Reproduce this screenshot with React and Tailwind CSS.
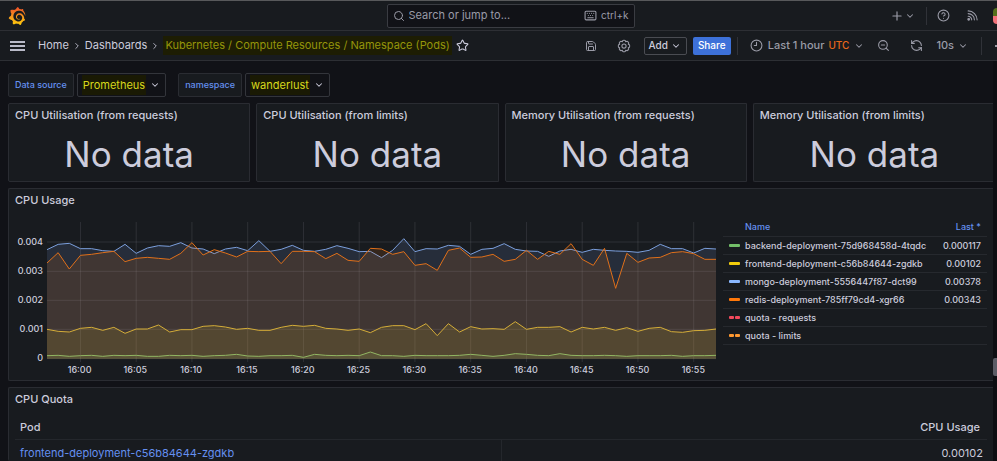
import React from "react";
import { SiGrafana } from "react-icons/si";
import { Search, ChevronDown, ChevronRight, Plus, CircleHelp, Clock9, ZoomOut, RefreshCcw, Keyboard, Save, Star } from "lucide-react";

// Samples are one minute apart; heights are in plot units (401 = 0, 51 = 0.004).
const SERIES = [
  {
    name: "green",
    stroke: "#73bf69",
    fill: "#73bf69",
    points: [392, 391, 394, 392, 391, 394, 391, 392, 391, 394, 394, 391, 392, 391, 394, 392, 391, 388, 393, 394, 392, 392, 391, 397, 388, 391, 392, 391, 392, 381, 392, 392, 394, 391, 392, 392, 392, 391, 388, 391, 394, 391, 386, 388, 391, 392, 386, 391, 392, 392, 391, 392, 394, 392, 392, 392, 391, 394, 392, 392, 391],
  },
  {
    name: "yellow",
    stroke: "#d9b526",
    fill: "#f2cc0c",
    points: [313, 319, 321, 310, 307, 316, 307, 325, 312, 312, 300, 321, 314, 314, 304, 302, 306, 313, 310, 316, 316, 307, 301, 304, 301, 310, 312, 316, 312, 323, 307, 302, 302, 314, 296, 332, 296, 321, 305, 312, 311, 313, 290, 313, 307, 307, 305, 321, 307, 312, 307, 316, 308, 319, 310, 307, 320, 322, 317, 316, 312],
  },
  {
    name: "blue",
    stroke: "#7b9fdd",
    fill: "#8ab8ff",
    points: [74, 58, 55, 71, 71, 77, 79, 58, 85, 69, 62, 64, 53, 69, 72, 86, 72, 67, 77, 47, 79, 73, 61, 76, 79, 73, 62, 70, 80, 79, 98, 76, 41, 80, 71, 72, 61, 64, 88, 73, 70, 56, 73, 78, 79, 94, 78, 73, 82, 73, 76, 78, 79, 82, 76, 58, 71, 71, 84, 70, 72],
  },
  {
    name: "orange",
    stroke: "#e0701a",
    fill: "#ff780a",
    points: [114, 83, 132, 91, 88, 83, 79, 110, 100, 97, 100, 103, 85, 53, 90, 74, 84, 96, 79, 80, 79, 116, 79, 79, 80, 101, 85, 106, 109, 70, 72, 88, 80, 121, 116, 136, 76, 69, 97, 96, 88, 109, 103, 76, 103, 79, 88, 56, 103, 121, 70, 190, 85, 112, 99, 97, 83, 80, 86, 103, 103],
  },
];

const TIMES = ["16:00", "16:05", "16:10", "16:15", "16:20", "16:25", "16:30", "16:35", "16:40", "16:45", "16:50", "16:55"];
const TICKS = ["0.004", "0.003", "0.002", "0.001", "0"];

const LEGEND = [
  { name: "backend-deployment-75d968458d-4tqdc", last: "0.000117", color: "bg-[#73bf69]" },
  { name: "frontend-deployment-c56b84644-zgdkb", last: "0.00102", color: "bg-[#f2cc0c]" },
  { name: "mongo-deployment-5556447f87-dct99", last: "0.00378", color: "bg-[#8ab8ff]" },
  { name: "redis-deployment-785ff79cd4-xgr66", last: "0.00343", color: "bg-[#ff780a]" },
  { name: "quota - requests", last: "", color: "bg-[#f2495c]", dashed: true },
  { name: "quota - limits", last: "", color: "bg-[#ff9830]", dashed: true },
];

const STATS = [
  "CPU Utilisation (from requests)",
  "CPU Utilisation (from limits)",
  "Memory Utilisation (from requests)",
  "Memory Utilisation (from limits)",
];

function line(points) {
  return points.map((y, i) => `${i * 10},${y}`).join(" ");
}

function Chart() {
  return (
    <svg viewBox="0 -9 600 420" preserveAspectRatio="none" className="block h-[140px] w-full" role="img" aria-label="CPU usage by pod">
      <g stroke="#ccccdc" strokeOpacity="0.12">
        {[51, 139, 226, 313, 401].map((y) => (
          <line key={y} x1="0" x2="600" y1={y} y2={y} vectorEffect="non-scaling-stroke" />
        ))}
        {TIMES.map((t, i) => (
          <line key={t} x1={30 + i * 50} x2={30 + i * 50} y1="-9" y2="411" vectorEffect="non-scaling-stroke" />
        ))}
      </g>
      {SERIES.map((s) => (
        <g key={s.name}>
          <polygon points={`0,401 ${line(s.points)} 600,401`} fill={s.fill} fillOpacity="0.12" />
          <polyline points={line(s.points)} fill="none" stroke={s.stroke} strokeWidth="1" vectorEffect="non-scaling-stroke" />
        </g>
      ))}
    </svg>
  );
}

function CogIcon() {
  return (
    <svg viewBox="0 0 24 24" className="size-[14px]" fill="none" stroke="currentColor" strokeWidth="1.8" strokeLinejoin="round">
      <path d="M10 2.6q2-.8 4 0l1 2 2.2-.7q2 .9 2.9 2.9l-.7 2.2 2 1q.8 2 0 4l-2 1 .7 2.2q-.9 2-2.9 2.9l-2.2-.7-1 2q-2 .8-4 0l-1-2-2.2.7q-2-.9-2.9-2.9l.7-2.2-2-1q-.8-2 0-4l2-1-.7-2.2q.9-2 2.9-2.9l2.2.7z" />
      <circle cx="12" cy="12" r="3.6" />
    </svg>
  );
}

function NewsIcon() {
  return (
    <svg viewBox="0 0 24 24" className="size-[13px]" fill="none" stroke="currentColor" strokeWidth="2" strokeLinecap="round">
      <path d="M4 3.5A16.5 16.5 0 0 1 20.5 20M4 8.500A11.5 11.5 0 0 1 15.5 20M4 13.500A6.5 6.5 0 0 1 10.5 20" />
      <circle cx="5" cy="19" r="1.6" fill="currentColor" />
    </svg>
  );
}

function Caret() {
  return <ChevronDown className="mx-px size-[10px] shrink-0" strokeWidth={2.5} />;
}

function Panel({ title, className = "", children }) {
  return (
    <section className={`rounded-l-[2px] border border-[#2a2c32] bg-[#181b1f] ${className}`}>
      <h2 className="flex h-[22px] items-center whitespace-nowrap px-1.5 text-[11px] font-medium">{title}</h2>
      {children}
    </section>
  );
}

function Variable({ label, value }) {
  return (
    <div className="flex h-6 gap-[3px]">
      <span className="flex items-center rounded-[2px] border border-[#2a2c32] bg-[#181b1f] px-1.5 text-[9px] font-medium text-[#6590f0]">{label}</span>
      <button type="button" aria-label={`${label}: ${value}`} className="flex items-center gap-[3px] rounded-[2px] border border-[#33353b] bg-[#111217] px-1 text-[11px] text-[#d8d81c]">
        <span className="bg-[#1a1a04] px-px py-0.5">{value}</span>
        <span className="text-[#ccccdc]"><Caret /></span>
      </button>
    </div>
  );
}

function Divider() {
  return <span className="h-[18px] w-px shrink-0 bg-[#303238]" />;
}

export default function App() {
  return (
    <div className="flex h-screen flex-col overflow-hidden border-t border-[#58595b] bg-[#111217] font-['Inter',sans-serif] text-[#ccccdc]">
      <svg className="absolute size-0" aria-hidden="true">
        <linearGradient id="flame" x1="0" y1="1" x2="0" y2="0">
          <stop offset="0" stopColor="#fccc0c" />
          <stop offset="0.5" stopColor="#f7941d" />
          <stop offset="1" stopColor="#ef4e28" />
        </linearGradient>
      </svg>

      <header className="grid h-[30px] shrink-0 grid-cols-[1fr_248px_1fr] items-center border-b border-[#2d2f34] bg-[#181b1f] text-[#9a9ba7]">
        <a href="#home" aria-label="Grafana" className="ml-2 w-[18px]">
          <SiGrafana className="size-[18px] fill-[url(#flame)]" />
        </a>
        <label className="ml-3 mr-[-12px] flex h-6 items-center gap-1 rounded-[2px] border border-[#3a3c42] bg-[#111217] px-[5px]">
          <Search className="size-3 shrink-0" />
          <input type="text" aria-label="Search" placeholder="Search or jump to..." className="w-0 min-w-0 flex-1 bg-transparent text-[11px] outline-none placeholder:text-[#9a9ba7]" />
          <Keyboard className="size-[13px] shrink-0" />
          <kbd className="font-['Inter',sans-serif] text-[10px]">ctrl+k</kbd>
        </label>
        <div className="flex items-center justify-end overflow-hidden">
          <button type="button" aria-label="New" className="flex items-center">
            <Plus className="size-[14px]" />
            <Caret />
          </button>
          <span className="ml-[10px] flex"><Divider /></span>
          <button type="button" aria-label="Help" className="ml-[10px]"><CircleHelp className="size-[13px]" /></button>
          <button type="button" aria-label="News" className="ml-4"><NewsIcon /></button>
          <span className="ml-[14px] flex h-4 w-1 flex-col overflow-hidden rounded-l-full">
            <span className="flex-1 bg-[#55701c]" />
            <span className="flex-1 bg-[#f2727a]" />
          </span>
        </div>
      </header>

      <div className="flex h-[30px] shrink-0 items-center overflow-hidden border-b border-[#2d2f34] bg-[#181b1f] text-[#9a9ba7]">
        <button type="button" aria-label="Menu" className="ml-[10px] flex w-[15px] shrink-0 flex-col gap-[2px]">
          <span className="h-[2px] bg-[#b9bac8]" />
          <span className="h-[2px] bg-[#b9bac8]" />
          <span className="h-[2px] bg-[#b9bac8]" />
        </button>
        <nav aria-label="Breadcrumb" className="ml-[13px] flex items-center whitespace-nowrap text-[11px] text-[#ccccdc]">
          <a href="#home">Home</a>
          <ChevronRight className="mx-[3px] size-[10px]" />
          <a href="#dashboards">Dashboards</a>
          <ChevronRight className="mx-[3px] size-[10px]" />
          <span className="bg-[#1d1d03] px-0.5 py-px text-[#95950a]">Kubernetes / Compute Resources / Namespace (Pods)</span>
        </nav>
        <button type="button" aria-label="Mark as favorite" className="ml-1 text-[#ccccdc]"><Star className="size-[13px]" /></button>

        <div className="ml-auto flex shrink-0 items-center">
          <button type="button" aria-label="Save dashboard"><Save className="size-3" /></button>
          <button type="button" aria-label="Settings" className="ml-5"><CogIcon /></button>
          <button type="button" className="ml-[13px] flex h-[18px] w-[43px] items-center justify-center gap-0.5 rounded-[2px] border border-[#4a4c52] text-[10px] font-medium text-[#ccccdc]">
            Add <Caret />
          </button>
          <button type="button" className="ml-1.5 h-[18px] w-[38px] rounded-[2px] bg-[#3d71d9] text-[10px] font-medium text-white">Share</button>
          <span className="ml-1.5 flex"><Divider /></span>
          <button type="button" className="ml-3 flex items-center text-[11px] font-medium">
            <Clock9 className="mr-[5px] size-[13px]" />
            Last 1 hour
            <span className="mx-1 text-[10px] text-[#e8671b]">UTC</span>
            <Caret />
          </button>
          <button type="button" aria-label="Zoom out" className="ml-3"><ZoomOut className="size-[13px]" /></button>
          <button type="button" aria-label="Refresh" className="ml-5"><RefreshCcw className="size-[13px]" /></button>
          <button type="button" className="ml-[13px] flex items-center gap-[3px] text-[11px] font-medium">
            10s <Caret />
          </button>
          <span className="ml-3 flex"><Divider /></span>
          <span className="ml-[13px] h-0.5 w-0.5 bg-[#9a9ba7]" />
        </div>
      </div>

      <div className="flex min-h-0 flex-1">
        <main className="flex min-w-0 flex-1 flex-col gap-1.5 overflow-hidden pl-2 pt-3">
          <div className="flex gap-3">
            <Variable label="Data source" value="Prometheus" />
            <Variable label="namespace" value="wanderlust" />
          </div>

          <div className="mr-[-2px] grid shrink-0 grid-cols-4 gap-1.5">
            {STATS.map((title) => (
              <Panel key={title} title={title} className="h-[79px] last:border-r-0">
                <p className="text-center text-[35px] leading-[57px]">No data</p>
              </Panel>
            ))}
          </div>

          <Panel title="CPU Usage" className="shrink-0 border-r-0 pb-[3px]">
            <div className="flex gap-[7px] pr-1.5 pt-[7px]">
              <div className="flex min-w-0 flex-1 pt-1 text-[9px] font-medium">
                <div className="w-[38px] shrink-0 pr-1 pt-[5px] text-right">
                  {TICKS.map((t) => (
                    <div key={t} className="h-[29px] leading-[29px]">{t}</div>
                  ))}
                </div>
                <div className="min-w-0 flex-1">
                  <Chart />
                  <div className="flex h-[15px] pl-[0.7%]">
                    {TIMES.map((t) => (
                      <span key={t} className="w-[8.4%] shrink-0 text-center leading-[15px]">{t}</span>
                    ))}
                  </div>
                </div>
              </div>
              <table className="w-[264px] shrink-0 table-fixed self-start text-[9px] font-medium">
                <thead>
                  <tr className="h-[18px] border-b border-[#26292e] text-[#6590f0]">
                    <th className="w-[22px] p-0" aria-label="Color" />
                    <th className="p-0 text-left font-medium">Name</th>
                    <th className="w-[52px] p-0 pr-1.5 text-right font-medium">Last *</th>
                  </tr>
                </thead>
                <tbody>
                  {LEGEND.map((row) => (
                    <tr key={row.name} className="h-[18px] border-b border-[#26292e]">
                      <td className="p-0 pl-1.5">
                        <span className="flex w-[11px] gap-px">
                          <span className={`h-[3px] flex-1 rounded-[1px] ${row.color}`} />
                          {row.dashed && <span className={`h-[3px] flex-1 rounded-[1px] ${row.color}`} />}
                        </span>
                      </td>
                      <td className="whitespace-nowrap p-0 leading-[17px]">{row.name}</td>
                      <td className="p-0 pr-1.5 text-right leading-[17px]">{row.last}</td>
                    </tr>
                  ))}
                </tbody>
              </table>
            </div>
          </Panel>

          <Panel title="CPU Quota" className="min-h-0 flex-1 overflow-hidden border-b-0 border-r-0">
            <div className="px-1.5 pt-1.5">
              <table className="w-full text-[11px]">
                <thead>
                  <tr className="h-[23px] border-b border-[#24272c]">
                    <th className="w-1/2 p-0 pl-[5px] text-left font-medium">Pod</th>
                    <th className="p-0 pr-[7px] text-right font-medium">CPU Usage</th>
                  </tr>
                </thead>
                <tbody>
                  <tr className="h-7">
                    <td className="border-r border-[#24272c] p-0 pl-[5px]">
                      <a href="#pod" className="text-[#6590f0]">frontend-deployment-c56b84644-zgdkb</a>
                    </td>
                    <td className="p-0 pr-1 text-right">0.00102</td>
                  </tr>
                </tbody>
              </table>
            </div>
          </Panel>
        </main>
        <div className="flex w-1 shrink-0 flex-col bg-[#0d0e12]">
          <span className="mt-[297px] h-[18px] rounded-l-[2px] bg-[#5c5d66]" />
        </div>
      </div>
    </div>
  );
}
